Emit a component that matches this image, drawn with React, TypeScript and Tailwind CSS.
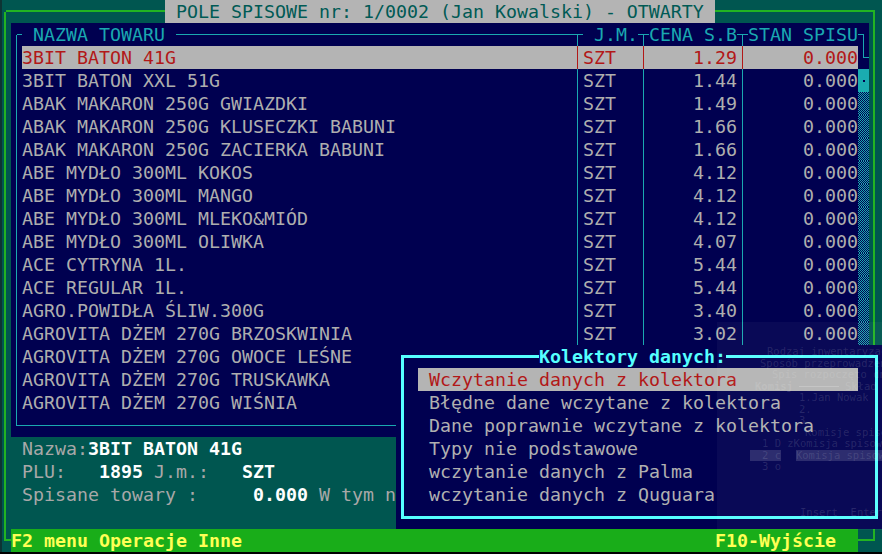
import React from 'react';

type Tone = 'cyan' | 'green' | 'red';

const items = [
  { name: '3BIT BATON 41G', price: '1.29' },
  { name: '3BIT BATON XXL 51G', price: '1.44' },
  { name: 'ABAK MAKARON 250G GWIAZDKI', price: '1.49' },
  { name: 'ABAK MAKARON 250G KLUSECZKI BABUNI', price: '1.66' },
  { name: 'ABAK MAKARON 250G ZACIERKA BABUNI', price: '1.66' },
  { name: 'ABE MYDŁO 300ML KOKOS', price: '4.12' },
  { name: 'ABE MYDŁO 300ML MANGO', price: '4.12' },
  { name: 'ABE MYDŁO 300ML MLEKO&MIÓD', price: '4.12' },
  { name: 'ABE MYDŁO 300ML OLIWKA', price: '4.07' },
  { name: 'ACE CYTRYNA 1L.', price: '5.44' },
  { name: 'ACE REGULAR 1L.', price: '5.44' },
  { name: 'AGRO.POWIDŁA ŚLIW.300G', price: '3.40' },
  { name: 'AGROVITA DŻEM 270G BRZOSKWINIA', price: '3.02' },
  { name: 'AGROVITA DŻEM 270G OWOCE LEŚNE', price: '3.02' },
  { name: 'AGROVITA DŻEM 270G TRUSKAWKA', price: '3.02' },
  { name: 'AGROVITA DŻEM 270G WIŚNIA', price: '3.02' },
];

const menu = [
  'Wczytanie danych z kolektora',
  'Błędne dane wczytane z kolektora',
  'Dane poprawnie wczytane z kolektora',
  'Typy nie podstawowe',
  'wczytanie danych z Palma',
  'wczytanie danych z Quguara',
];

// one text-mode cell holding a box-drawing piece
const Ln: React.FC<{ u?: boolean; d?: boolean; l?: boolean; r?: boolean; tone?: Tone; className?: string }> = ({
  u,
  d,
  l,
  r,
  tone = 'cyan',
  className = '',
}) => {
  const c = tone === 'green' ? 'border-[#22b422]' : tone === 'red' ? 'border-[#b21818]' : 'border-[#1aa8b0]';
  const vr = tone === 'green' ? 'border-r-2' : 'border-r';
  const hb = tone === 'green' ? 'border-b-2' : 'border-b';
  return (
    <div className={`grid h-[23px] w-[11px] shrink-0 grid-cols-2 grid-rows-2 ${className}`}>
      <div className={`${u ? vr : ''} ${l ? hb : ''} ${c}`} />
      <div className={`${r ? hb : ''} ${c}`} />
      <div className={`${d ? vr : ''} ${c}`} />
      <div />
    </div>
  );
};

const HRun: React.FC<{ w: string; tone?: Tone }> = ({ w, tone = 'cyan' }) => (
  <div className={`grid h-[23px] shrink-0 grid-rows-2 ${w}`}>
    <div className={tone === 'green' ? 'border-b-2 border-[#22b422]' : 'border-b border-[#1aa8b0]'} />
  </div>
);

const ItemRow: React.FC<{ name: string; price: string; idx: number }> = ({ name, price, idx }) => {
  const active = idx === 0;
  const cell = active ? 'bg-[#b4b4b4] text-[#b21818]' : 'text-[#aeaeae]';
  const sep = active ? 'bg-[#b4b4b4]' : '';
  const tone: Tone = active ? 'red' : 'cyan';
  return (
    <div className="flex h-[23px]">
      <Ln u d />
      <div className={`w-[550px] shrink-0 whitespace-pre ${cell}`}>{name}</div>
      <Ln u d tone={tone} className={sep} />
      <div className={`w-[55px] shrink-0 ${cell}`}>SZT</div>
      <Ln u d tone={tone} className={sep} />
      <div className={`w-[88px] shrink-0 text-right ${cell}`}>{price}</div>
      <Ln u d tone={tone} className={sep} />
      <div className={`w-[110px] shrink-0 text-right ${cell}`}>0.000</div>
      {idx === 0 ? (
        <Ln u r />
      ) : idx === 1 ? (
        <div className="flex h-[23px] w-[11px] shrink-0 items-center justify-center bg-[#1aacb0]">
          <div className="h-[2px] w-[2px] bg-[#000050]" />
        </div>
      ) : (
        <div className="h-[23px] w-[11px] shrink-0 bg-[image:repeating-conic-gradient(#1aa8b0_0_25%,#000050_0_50%)] bg-[length:2px_2px]" />
      )}
    </div>
  );
};

const GhostPanel: React.FC = () => (
  <div className="pointer-events-none absolute left-[717px] top-[322px] h-[208px] w-[165px] bg-white/[0.035] pt-[24px] font-['DejaVu_Sans_Mono',monospace] text-[10.5px] leading-[11.5px] text-white/[0.12]">
    <div className="h-[11.5px] whitespace-pre pl-[50px]">Rodzaj inwentaryzacji</div>
    <div className="h-[11.5px] whitespace-pre pl-[43px]">Sposób przeprowadzenia</div>
    <div className="h-[11.5px] whitespace-pre pl-[55px]">Spis rozpoczęto dnia</div>
    <div className="flex h-[11.5px] items-center pl-[38px]">
      <span className="font-bold">Komisj</span>
      <div className="mx-[6px] h-px w-[40px] bg-white/20" />
      <span>Skład</span>
    </div>
    <div className="h-[11.5px] whitespace-pre pl-[82px]">1.Jan Nowak</div>
    <div className="h-[11.5px] whitespace-pre pl-[82px]">2.</div>
    <div className="h-[11.5px] whitespace-pre pl-[82px]">3.</div>
    <div className="h-[11.5px] whitespace-pre pl-[88px]">Komisje spisowe</div>
    <div className="flex h-[11.5px] whitespace-pre">
      <span className="w-[88px] pl-[45px]">1 D z</span>
      <span>Komisja spisowa</span>
    </div>
    <div className="flex h-[11.5px] whitespace-pre">
      <span className="ml-[33px] w-[40px] bg-white/15 pl-[12px]">2 c</span>
      <span className="ml-[15px] flex-1 bg-white/15">Komisja spisowa</span>
    </div>
    <div className="h-[11.5px] whitespace-pre pl-[45px]">3 o</div>
    <div className="h-[34.5px]" />
    <div className="h-[11.5px] whitespace-pre pl-[83px]">Insert  Enter</div>
  </div>
);

const App: React.FC = () => {
  return (
    <div className="h-[554px] w-[882px] overflow-hidden bg-black font-['DejaVu_Sans_Mono',monospace] text-[18.27px] leading-[23px]">
      <div className="relative h-[552px] w-[882px] bg-[#005650] shadow-[inset_2px_0_0_#0d3434]">
        {/* title line */}
        <div className="flex h-[23px]">
          <Ln r d tone="green" />
          <HRun w="w-[154px]" tone="green" />
          <div className="w-[550px] shrink-0 whitespace-pre bg-[#b4b4b4] pl-[11px] text-[#005a55]">
            POLE SPISOWE nr: 1/0002 (Jan Kowalski) - OTWARTY
          </div>
          <HRun w="w-[154px]" tone="green" />
          <Ln l d tone="green" />
        </div>

        <div className="flex h-[506px]">
          <div className="flex w-[11px] shrink-0 justify-center">
            <div className="ml-[-2px] w-[2px] bg-[#22b422]" />
          </div>

          <div className="flex w-[858px] shrink-0 flex-col">
            {/* product list */}
            <div className="flex flex-col bg-[#000050]">
              <div className="flex h-[23px] text-[#1aa8b0]">
                <Ln r d />
                <div className="w-[11px] shrink-0" />
                <div className="w-[132px] shrink-0 whitespace-pre">NAZWA TOWARU</div>
                <div className="w-[11px] shrink-0" />
                <HRun w="w-[396px]" />
                <Ln l r d />
                <div className="w-[55px] shrink-0 whitespace-pre"> J.M.</div>
                <Ln l r d />
                <div className="w-[88px] shrink-0 whitespace-pre">CENA S.B</div>
                <Ln l r d />
                <div className="w-[110px] shrink-0 whitespace-pre">STAN SPISU</div>
                <Ln l d />
              </div>
              {items.map((item, i) => (
                <ItemRow key={item.name} name={item.name} price={item.price} idx={i} />
              ))}
              <div className="flex h-[23px]">
                <Ln u r />
                <HRun w="w-[550px]" />
                <Ln u l r />
                <HRun w="w-[55px]" />
                <Ln u l r />
                <HRun w="w-[88px]" />
                <Ln u l r />
                <HRun w="w-[110px]" />
                <Ln u l />
              </div>
            </div>

            {/* details of the selected product */}
            <div className="flex flex-col whitespace-pre text-[#a8a8a8]">
              <div className="h-[23px]">
                {' Nazwa:'}
                <b className="text-white">3BIT BATON 41G</b>
              </div>
              <div className="h-[23px]">
                {' PLU:   '}
                <b className="text-white">1895</b>
                {' J.m.:   '}
                <b className="text-white">SZT</b>
              </div>
              <div className="h-[23px]">
                {' Spisane towary :     '}
                <b className="text-white">0.000</b>
                {' W tym na kolektorze'}
              </div>
              <div className="h-[23px]" />
            </div>
          </div>

          <div className="flex w-[11px] shrink-0 justify-center">
            <div className="ml-[-2px] w-[2px] bg-[#22b422]" />
          </div>
        </div>

        {/* status line */}
        <div className="flex h-[23px]">
          <Ln u r tone="green" />
          <div className="flex w-[847px] shrink-0 justify-between whitespace-pre bg-[#19ad19] pr-[22px] font-bold text-[#ffff55]">
            <span>F2 menu Operacje Inne</span>
            <span>F10-Wyjście</span>
          </div>
          <HRun w="w-[11px]" tone="green" />
          <Ln u l tone="green" />
        </div>

        {/* popup menu */}
        <div className="absolute left-[396px] top-[345px] h-[184px] w-[486px] bg-[#000050] pb-[10px] pl-[5px] pr-[4px] pt-[10px]">
          <div className="relative h-full border-[3px] border-[#55ffff] pl-[14px] pt-[10px]">
            <div className="absolute left-[135px] top-[-13px] h-[23px] bg-[#000050] font-bold text-[#55ffff]">
              Kolektory danych:
            </div>
            {menu.map((m, i) => (
              <div
                key={m}
                className={`h-[23px] w-[440px] whitespace-pre pl-[11px] ${
                  i === 0 ? 'bg-[#b4b4b4] text-[#b21818]' : 'text-[#b0b0b0]'
                }`}
              >
                {m}
              </div>
            ))}
          </div>
        </div>

        <GhostPanel />
      </div>
    </div>
  );
};

export default App;
